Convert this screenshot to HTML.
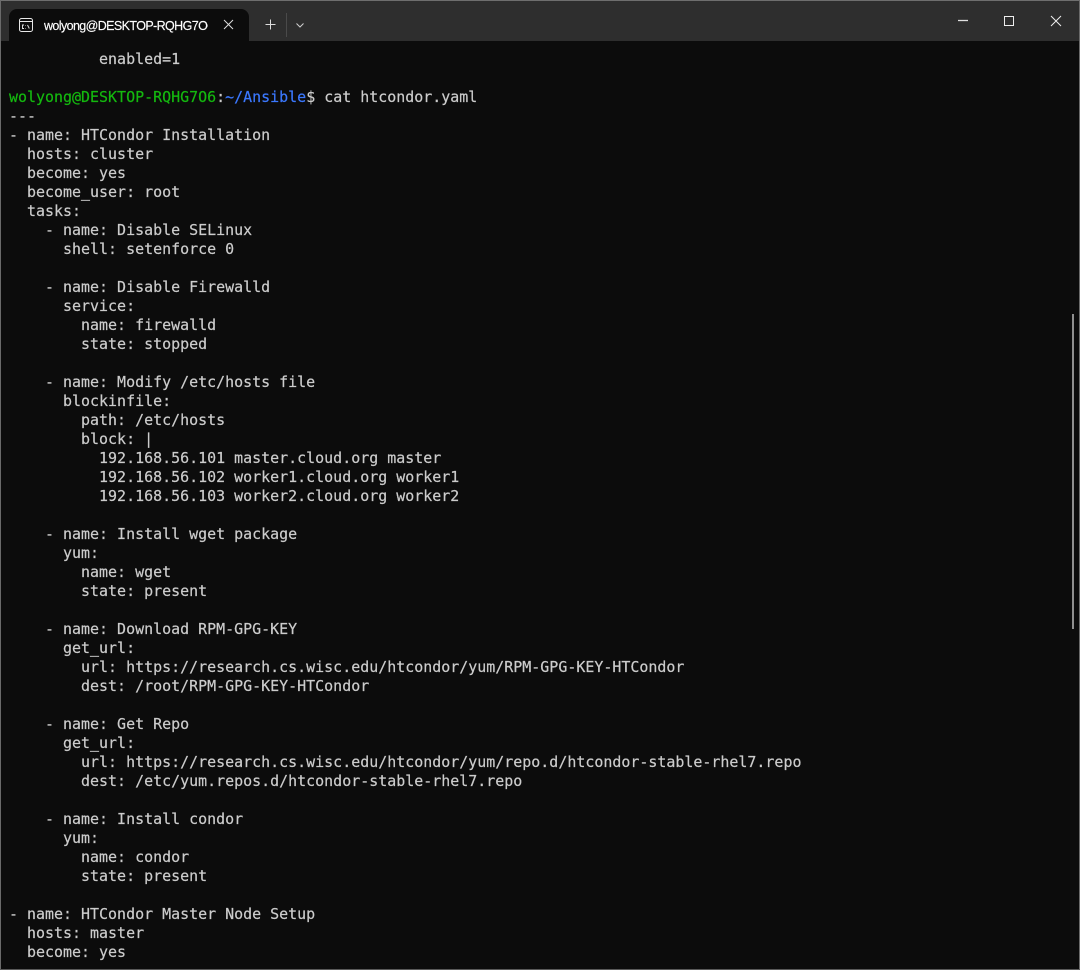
<!DOCTYPE html>
<html>
<head>
<meta charset="utf-8">
<style>
html,body{margin:0;padding:0;background:#0c0c0c;}
body{position:relative;width:1080px;height:970px;overflow:hidden;}
#bar{position:absolute;left:0;top:0;width:1080px;height:41px;background:#2e2e2e;}
#top{position:absolute;left:0;top:0;width:1080px;height:1px;background:#6e6e6e;}
#lb{position:absolute;left:0;top:0;width:1px;height:970px;background:#6a6a6a;}
#rb{position:absolute;left:1079px;top:0;width:1px;height:970px;background:#6a6a6a;}
#bb{position:absolute;left:0;top:969px;width:1080px;height:1px;background:#5a5a5a;}
#tab{position:absolute;left:9px;top:9px;width:240px;height:32px;background:#0c0c0c;border-radius:8px 8px 0 0;}
#title{position:absolute;left:44px;top:16px;width:164px;height:20px;overflow:hidden;white-space:nowrap;font:12.5px/20px "Liberation Sans",sans-serif;color:#fff;letter-spacing:-0.6px;-webkit-text-stroke:0.15px #fff;}
#term{position:absolute;left:9px;top:50px;margin:0;font-family:"DejaVu Sans Mono",monospace;font-size:14.95px;letter-spacing:0.012px;line-height:19px;color:#cccccc;white-space:pre;-webkit-text-stroke:0.2px;}
.g{color:#14b80f}.b{color:#3b78ff}
#sb{position:absolute;left:1072px;top:314px;width:2px;height:315px;background:#8f8f8f;}
svg{position:absolute;left:0;top:0;}
</style>
</head>
<body>
<div id="bar"></div>
<div id="tab"></div>
<div id="title">wolyong@DESKTOP-RQHG7O6: ~</div>
<svg width="1080" height="41" viewBox="0 0 1080 41" fill="none" stroke="#e8e8e8" stroke-width="1">
<rect x="19.5" y="18.500" width="13" height="13" rx="2"/>
<path d="M19.500 21.500h13"/>
<path d="M24 25h-1.500v3.500h1.500M25.500 25.500v.5M25.500 28v.5M27.500 25l1.800 3.500" stroke-width="0.9"/>
<path d="M224 20l9 9M233 20l-9 9" stroke="#dddddd"/>
<path d="M265.500 24.500h10M270.500 19.500v10" stroke="#dddddd"/>
<path d="M286.500 13v24" stroke="#4a4a4a"/>
<path d="M296.500 23.500l3.500 3.500 3.500-3.500" stroke="#cfcfcf"/>
<path d="M958 20.500h10" stroke="#e0e0e0" stroke-width="1.300"/>
<rect x="1004.500" y="16.500" width="9" height="9" stroke="#eeeeee"/>
<path d="M1051 16l10 10M1061 16l-10 10" stroke="#eeeeee"/>
</svg>
<pre id="term">          enabled=1

<span class="g">wolyong@DESKTOP-RQHG7O6</span>:<span class="b">~/Ansible</span>$ cat htcondor.yaml
---
- name: HTCondor Installation
  hosts: cluster
  become: yes
  become_user: root
  tasks:
    - name: Disable SELinux
      shell: setenforce 0

    - name: Disable Firewalld
      service:
        name: firewalld
        state: stopped

    - name: Modify /etc/hosts file
      blockinfile:
        path: /etc/hosts
        block: |
          192.168.56.101 master.cloud.org master
          192.168.56.102 worker1.cloud.org worker1
          192.168.56.103 worker2.cloud.org worker2

    - name: Install wget package
      yum:
        name: wget
        state: present

    - name: Download RPM-GPG-KEY
      get_url:
        url: https://research.cs.wisc.edu/htcondor/yum/RPM-GPG-KEY-HTCondor
        dest: /root/RPM-GPG-KEY-HTCondor

    - name: Get Repo
      get_url:
        url: https://research.cs.wisc.edu/htcondor/yum/repo.d/htcondor-stable-rhel7.repo
        dest: /etc/yum.repos.d/htcondor-stable-rhel7.repo

    - name: Install condor
      yum:
        name: condor
        state: present

- name: HTCondor Master Node Setup
  hosts: master
  become: yes</pre>
<div id="sb"></div>
<div id="top"></div>
<div id="lb"></div>
<div id="rb"></div>
<div id="bb"></div>
</body>
</html>
